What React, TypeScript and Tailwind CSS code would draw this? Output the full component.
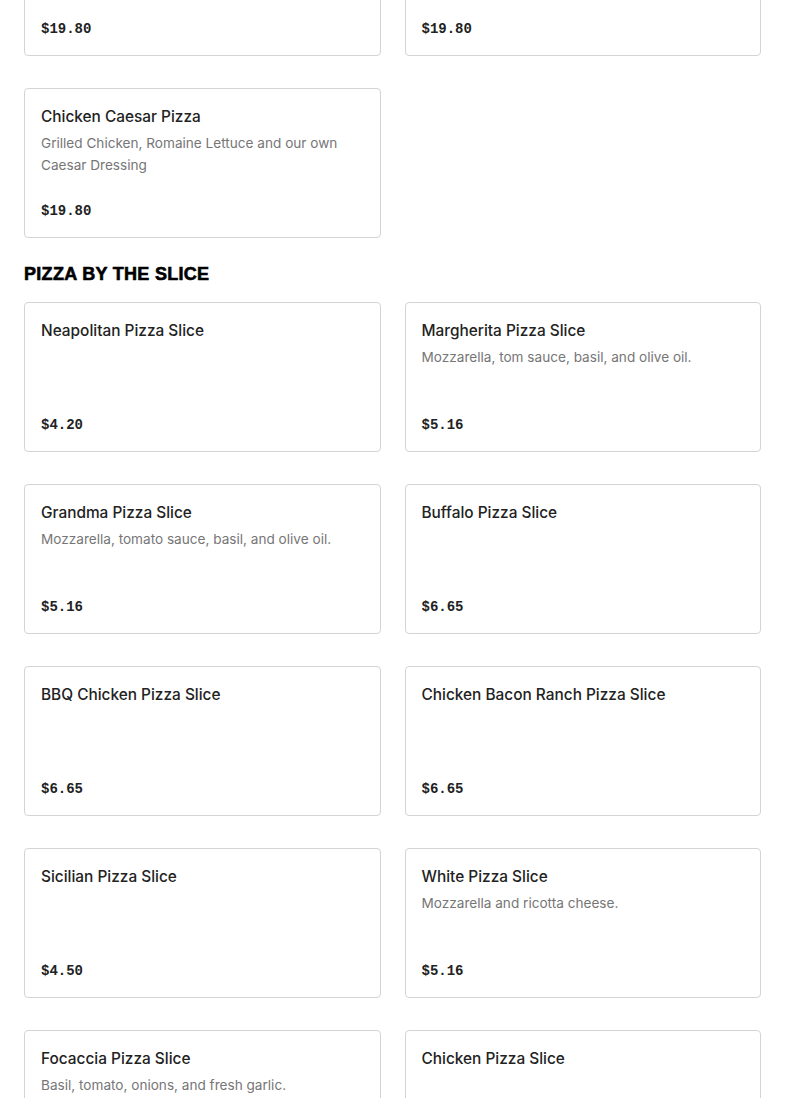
import React from "react";

interface MenuItem {
  name: string;
  description?: string;
  price: string;
}

const specialtyPies: MenuItem[] = [
  { name: "Buffalo Chicken Pizza", description: "Fried Chicken, Buffalo Sauce and Mozzarella", price: "$19.80" },
  { name: "BBQ Chicken Pizza", description: "Grilled Chicken, BBQ Sauce, Red Onions and Mozzarella", price: "$19.80" },
  {
    name: "Chicken Caesar Pizza",
    description: "Grilled Chicken, Romaine Lettuce and our own Caesar Dressing",
    price: "$19.80",
  },
];

const slices: MenuItem[] = [
  { name: "Neapolitan Pizza Slice", price: "$4.20" },
  { name: "Margherita Pizza Slice", description: "Mozzarella, tom sauce, basil, and olive oil.", price: "$5.16" },
  { name: "Grandma Pizza Slice", description: "Mozzarella, tomato sauce, basil, and olive oil.", price: "$5.16" },
  { name: "Buffalo Pizza Slice", price: "$6.65" },
  { name: "BBQ Chicken Pizza Slice", price: "$6.65" },
  { name: "Chicken Bacon Ranch Pizza Slice", price: "$6.65" },
  { name: "Sicilian Pizza Slice", price: "$4.50" },
  { name: "White Pizza Slice", description: "Mozzarella and ricotta cheese.", price: "$5.16" },
  { name: "Focaccia Pizza Slice", description: "Basil, tomato, onions, and fresh garlic.", price: "$5.16" },
  { name: "Chicken Pizza Slice", price: "$6.65" },
];

const MenuCard: React.FC<{ item: MenuItem }> = ({ item }) => (
  <div className="flex min-h-[150px] flex-col justify-between rounded border border-[#d4d4d4] bg-white p-4">
    <div>
      <h3 className="font-['Inter',sans-serif] text-[15.4px] leading-6 font-medium text-[#222]">
        {item.name}
      </h3>
      {item.description && (
        <p className="mt-[3px] font-['Inter',sans-serif] text-[13.6px] leading-[22px] text-[#767676]">
          {item.description}
        </p>
      )}
    </div>
    <p className="mt-6 font-['Liberation_Mono',monospace] text-sm leading-5 font-bold text-[#222]">
      {item.price}
    </p>
  </div>
);

export default function App() {
  return (
    <div className="min-h-screen overflow-hidden bg-white">
      <div className="-mt-[94px] px-6 pb-10">
        <div className="grid grid-cols-2 gap-x-6 gap-y-8">
          {specialtyPies.map((item) => (
            <MenuCard key={item.name} item={item} />
          ))}
        </div>

        {/* section heading */}
        <h2 className="mt-6 mb-4 font-['Liberation_Sans',sans-serif] text-[18px] leading-6 font-black tracking-[0.3px] uppercase text-black [-webkit-text-stroke:0.6px_black]">
          Pizza by the Slice
        </h2>

        <div className="grid grid-cols-2 gap-x-6 gap-y-8">
          {slices.map((item) => (
            <MenuCard key={item.name} item={item} />
          ))}
        </div>
      </div>
    </div>
  );
}
